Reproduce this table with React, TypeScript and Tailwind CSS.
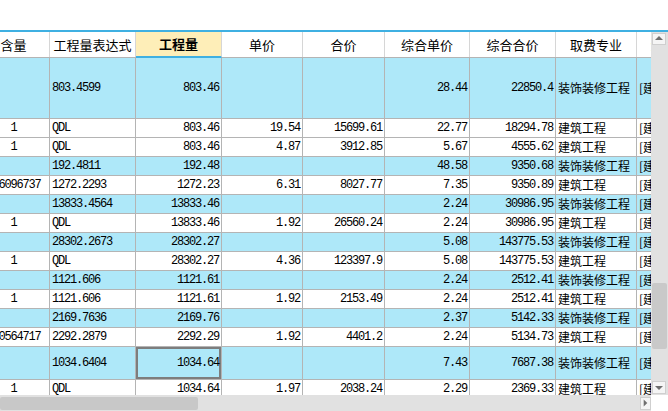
import type { ReactNode } from "react";

// column widths (first column is partly scrolled off to the left)
const COLS = [
  { w: "w-[72px]", align: "justify-center", cjk: false },
  { w: "w-[86px]", align: "justify-start pl-[2px]", cjk: false },
  { w: "w-[86px]", align: "justify-end pr-[2px]", cjk: false },
  { w: "w-[81px]", align: "justify-end pr-[2px]", cjk: false },
  { w: "w-[82px]", align: "justify-end pr-[2px]", cjk: false },
  { w: "w-[85px]", align: "justify-end pr-[2px]", cjk: false },
  { w: "w-[86px]", align: "justify-end pr-[2px]", cjk: false },
  { w: "w-[81px]", align: "justify-start pl-[2px]", cjk: true },
  { w: "w-[80px]", align: "justify-start pl-[2px]", cjk: true },
];

const HEADERS = ["含量", "工程量表达式", "工程量", "单价", "合价", "综合单价", "综合合价", "取费专业", "汇总类别"];

type Row = { h: string; blue: boolean; c: string[]; sel?: boolean };

const ZS = "装饰装修工程";
const JZ = "建筑工程";
const TAG = "[建筑]";

const ROWS: Row[] = [
  { h: "h-[60px]", blue: true, c: ["", "803.4599", "803.46", "", "", "28.44", "22850.4", ZS, TAG] },
  { h: "h-[18px]", blue: false, c: ["1", "QDL", "803.46", "19.54", "15699.61", "22.77", "18294.78", JZ, TAG] },
  { h: "h-[18px]", blue: false, c: ["1", "QDL", "803.46", "4.87", "3912.85", "5.67", "4555.62", JZ, TAG] },
  { h: "h-[18px]", blue: true, c: ["", "192.4811", "192.48", "", "", "48.58", "9350.68", ZS, TAG] },
  { h: "h-[18px]", blue: false, c: ["0.6096737", "1272.2293", "1272.23", "6.31", "8027.77", "7.35", "9350.89", JZ, TAG] },
  { h: "h-[18px]", blue: true, c: ["", "13833.4564", "13833.46", "", "", "2.24", "30986.95", ZS, TAG] },
  { h: "h-[18px]", blue: false, c: ["1", "QDL", "13833.46", "1.92", "26560.24", "2.24", "30986.95", JZ, TAG] },
  { h: "h-[18px]", blue: true, c: ["", "28302.2673", "28302.27", "", "", "5.08", "143775.53", ZS, TAG] },
  { h: "h-[18px]", blue: false, c: ["1", "QDL", "28302.27", "4.36", "123397.9", "5.08", "143775.53", JZ, TAG] },
  { h: "h-[18px]", blue: true, c: ["", "1121.606", "1121.61", "", "", "2.24", "2512.41", ZS, TAG] },
  { h: "h-[18px]", blue: false, c: ["1", "1121.606", "1121.61", "1.92", "2153.49", "2.24", "2512.41", JZ, TAG] },
  { h: "h-[18px]", blue: true, c: ["", "2169.7636", "2169.76", "", "", "2.37", "5142.33", ZS, TAG] },
  { h: "h-[18px]", blue: false, c: ["0.0564717", "2292.2879", "2292.29", "1.92", "4401.2", "2.24", "5134.73", JZ, TAG] },
  { h: "h-[32px]", blue: true, sel: true, c: ["", "1034.6404", "1034.64", "", "", "7.43", "7687.38", ZS, TAG] },
  { h: "h-[18px]", blue: false, c: ["1", "QDL", "1034.64", "1.97", "2038.24", "2.29", "2369.33", JZ, TAG] },
];

const MONO = "font-['Liberation_Mono','DejaVu_Sans_Mono',monospace] text-[12px] tracking-[-1.2px]";
const CJK = "font-['Noto_Sans_CJK_SC',sans-serif] text-[12px]";

function Cell({ i, children, sel }: { i: number; children: ReactNode; sel?: boolean }) {
  const col = COLS[i];
  return (
    <div
      className={`flex items-center shrink-0 overflow-hidden whitespace-nowrap border-r border-[#b4b4b4] text-black ${col.w} ${col.align} ${col.cjk ? CJK : MONO} ${sel ? "shadow-[inset_0_0_0_2px_#7d7d7d]" : ""}`}
    >
      {children}
    </div>
  );
}

function Triangle({ dir }: { dir: "up" | "down" | "right" }) {
  const pts = dir === "up" ? "1,6 5,2 9,6" : dir === "down" ? "1,3 9,3 5,7" : "3,1 7,5 3,9";
  return (
    <svg width="10" height="10" viewBox="0 0 10 10">
      <polygon points={pts} fill="#6f6f6f" />
    </svg>
  );
}

export default function App() {
  return (
    <div className="w-[668px] h-[411px] bg-white overflow-hidden flex flex-col">
      <div className="h-[30px] shrink-0" />
      <div className="h-[2px] bg-[#3fb0e2] shrink-0" />
      <div className="flex h-[363px] shrink-0">
        <div className="w-[651px] overflow-hidden">
          <div className="ml-[-22px] w-[760px]">
            {/* header */}
            <div className="flex h-[26px] border-b border-[#b4b4b4] bg-white">
              {HEADERS.map((h, i) => (
                <div
                  key={h}
                  className={`flex items-center justify-center shrink-0 whitespace-nowrap border-r border-[#d6d6d6] font-['Noto_Sans_CJK_SC',sans-serif] text-[13px] ${COLS[i].w} ${
                    i === 2 ? "bg-[#feeeb8] font-bold border-b-2 border-b-[#3fb0e2] -mb-px" : ""
                  }`}
                >
                  {h}
                </div>
              ))}
            </div>
            {/* body */}
            {ROWS.map((r, ri) => (
              <div key={ri} className={`flex border-b border-[#b4b4b4] ${r.h} box-content ${r.blue ? "bg-[#aee8f9]" : "bg-white"}`}>
                {r.c.map((v, i) => (
                  <Cell key={i} i={i} sel={r.sel && i === 2}>
                    {v}
                  </Cell>
                ))}
              </div>
            ))}
          </div>
        </div>
        {/* vertical scrollbar */}
        <div className="w-[17px] bg-[#e1e1e1] flex flex-col items-start pl-[1px]">
          <div className="mt-[1px] w-[14px] h-[12px] bg-[#f5f5f5] border border-[#cfcfcf] flex items-center justify-center">
            <Triangle dir="up" />
          </div>
          <div className="h-[238px]" />
          <div className="w-[15px] h-[66px] bg-[#c9c9c9] rounded-[2px]" />
          <div className="flex-1" />
          <div className="mb-[1px] w-[14px] h-[13px] bg-[#f5f5f5] border border-[#cfcfcf] flex items-center justify-center">
            <Triangle dir="down" />
          </div>
        </div>
      </div>
      {/* horizontal scrollbar */}
      <div className="flex h-[16px] shrink-0">
        <div className="w-[651px] bg-[#e1e1e1] flex items-center">
          <div className="w-[198px] h-[13px] bg-[#c8c8c8] rounded-[2px]" />
          <div className="flex-1" />
          <div className="w-[11px] h-[13px] bg-[#f5f5f5] border border-[#cfcfcf] flex items-center justify-center">
            <Triangle dir="right" />
          </div>
        </div>
        <div className="flex-1 bg-white" />
      </div>
    </div>
  );
}
